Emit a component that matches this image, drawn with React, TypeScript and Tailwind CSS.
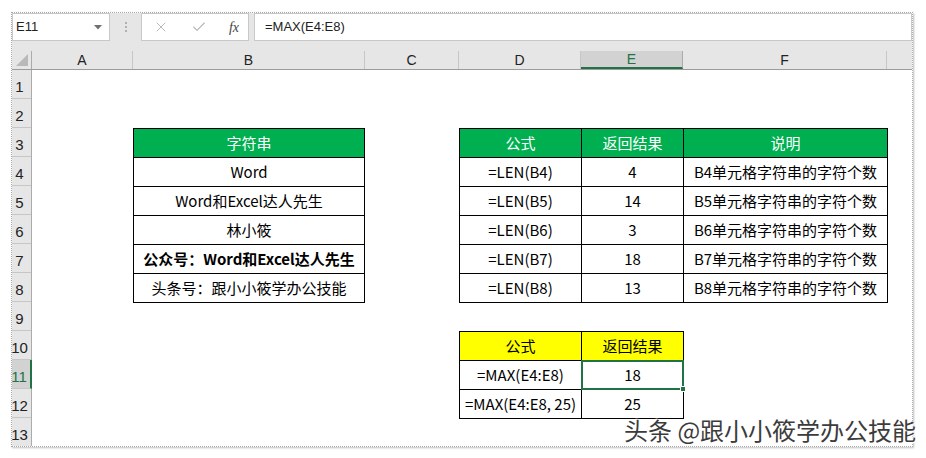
import { X, Check } from "lucide-react";

const cellFont = { fontFamily: '"Noto Sans CJK SC", "Liberation Sans", sans-serif' };

const colLetters = [
  { label: "A", w: "w-[101px]" },
  { label: "B", w: "w-[232px]" },
  { label: "C", w: "w-[94px]" },
  { label: "D", w: "w-[122px]" },
  { label: "E", w: "w-[102px]", active: true },
  { label: "F", w: "w-[204px]" },
];

const strings = [
  "Word",
  "Word和Excel达人先生",
  "林小筱",
  "公众号：Word和Excel达人先生",
  "头条号：跟小小筱学办公技能",
];

const lenRows = [
  { f: "=LEN(B4)", r: 4, d: "B4单元格字符串的字符个数" },
  { f: "=LEN(B5)", r: 14, d: "B5单元格字符串的字符个数" },
  { f: "=LEN(B6)", r: 3, d: "B6单元格字符串的字符个数" },
  { f: "=LEN(B7)", r: 18, d: "B7单元格字符串的字符个数" },
  { f: "=LEN(B8)", r: 13, d: "B8单元格字符串的字符个数" },
];

const rows = Array.from({ length: 13 }, (_, i) => i + 1);

const td = "border border-black text-center text-[15px] text-black h-[29px] p-0 whitespace-nowrap";
const th = "border border-black text-center text-[15px] h-[29px] p-0 font-normal whitespace-nowrap";

export default function App() {
  return (
    <div className="relative w-[926px] h-[458px] bg-white overflow-hidden">
      <div className="ml-[11px] mt-[12px] w-[902px] h-[435px] border border-dotted border-[#a8a8a8] shadow-[1px_1px_2px_rgba(0,0,0,0.25)] overflow-hidden">
        {/* formula bar */}
        <div className="flex h-[28px] bg-[#e6e6e6] items-stretch" style={{ fontFamily: '"Liberation Sans", Arial, sans-serif' }}>
          <div className="w-[98px] bg-white border border-[#c8c8c8] flex items-center justify-between pl-[3px] pr-[7px] text-[13px] text-[#222]">
            <span>E11</span>
            <svg width="8" height="5" viewBox="0 0 8 5">
              <polygon points="0,0 8,0 4,4.5" fill="#707070" />
            </svg>
          </div>
          <div className="w-[31px] flex flex-col items-center justify-center gap-[2px]">
            <span className="w-[2px] h-[2px] bg-[#b0b0b0]" />
            <span className="w-[2px] h-[2px] bg-[#b0b0b0]" />
            <span className="w-[2px] h-[2px] bg-[#b0b0b0]" />
          </div>
          <div className="w-[108px] bg-white border border-[#c8c8c8] flex items-center pl-[11px] pr-[9px] justify-between">
            <X size={16} strokeWidth={1.4} color="#b4b4b4" />
            <Check size={16} strokeWidth={1.6} color="#b4b4b4" />
            <span className="italic text-[14px] text-[#444]" style={{ fontFamily: '"Liberation Serif", serif' }}>
              fx
            </span>
          </div>
          <div className="ml-[5px] flex-1 bg-white border border-[#c8c8c8] flex items-center pl-[10px] text-[13px] text-[#222]">
            =MAX(E4:E8)
          </div>
        </div>

        {/* column headers */}
        <div className="h-[29px] bg-[#e6e6e6] flex items-end border-b border-[#9c9c9c]" style={{ fontFamily: '"Liberation Sans", Arial, sans-serif' }}>
          <div className="w-[20px] h-[18px] border-r border-[#ababab] relative">
            <svg className="absolute right-[3px] bottom-[3px]" width="12" height="12" viewBox="0 0 12 12">
              <polygon points="12,0 12,12 0,12" fill="#b9b9b9" />
            </svg>
          </div>
          {colLetters.map((c) =>
            c.active ? (
              <div
                key={c.label}
                className={`${c.w} h-[18px] bg-[#d2d2d2] border-r border-[#ababab] border-b-2 border-b-[#217346] flex items-center justify-center text-[14px] text-[#217346]`}
              >
                {c.label}
              </div>
            ) : (
              <div key={c.label} className={`${c.w} h-[18px] border-r border-[#c6c6c6] flex items-center justify-center text-[14px] text-[#222]`}>
                {c.label}
              </div>
            )
          )}
          <div className="flex-1 h-[18px]" />
        </div>

        {/* sheet body */}
        <div className="flex">
          <div className="w-[20px] flex flex-col bg-[#e6e6e6] border-r border-[#ababab]" style={{ fontFamily: '"Liberation Sans", Arial, sans-serif' }}>
            {rows.map((n) =>
              n === 11 ? (
                <div key={n} className="h-[29px] shrink-0 bg-[#d2d2d2] border-b border-[#c6c6c6] border-r-2 border-r-[#217346] -mr-px flex items-end">
                  <div className="w-[24px] -ml-[4px] text-center text-[15px] leading-[18px] text-[#217346] pb-[2px]">{n}</div>
                </div>
              ) : (
                <div key={n} className="h-[29px] shrink-0 border-b border-[#c6c6c6] flex items-end">
                  <div className="w-[24px] -ml-[4px] text-center text-[15px] leading-[18px] text-[#222] pb-[2px]">{n}</div>
                </div>
              )
            )}
          </div>

          <div
            className="flex-1 grid grid-cols-[101px_232px_94px_122px_102px_204px_1fr] grid-rows-[repeat(13,29px)]"
            style={cellFont}
          >
            {/* string table */}
            <div className="col-start-2 row-start-3 row-span-6">
              <table className="w-full border-collapse table-fixed">
                <thead>
                  <tr>
                    <th className={`${th} bg-[#00b050] text-white`}>字符串</th>
                  </tr>
                </thead>
                <tbody>
                  {strings.map((s, i) => (
                    <tr key={s}>
                      <td className={`${td} ${i === 3 ? "font-bold" : ""}`}>{s}</td>
                    </tr>
                  ))}
                </tbody>
              </table>
            </div>

            {/* LEN table */}
            <div className="col-start-4 col-span-3 row-start-3 row-span-6">
              <table className="w-full border-collapse table-fixed">
                <colgroup>
                  <col className="w-[122px]" />
                  <col className="w-[102px]" />
                  <col className="w-[204px]" />
                </colgroup>
                <thead>
                  <tr>
                    <th className={`${th} bg-[#00b050] text-white`}>公式</th>
                    <th className={`${th} bg-[#00b050] text-white`}>返回结果</th>
                    <th className={`${th} bg-[#00b050] text-white`}>说明</th>
                  </tr>
                </thead>
                <tbody>
                  {lenRows.map((r) => (
                    <tr key={r.f}>
                      <td className={td}>{r.f}</td>
                      <td className={td}>{r.r}</td>
                      <td className={td}>{r.d}</td>
                    </tr>
                  ))}
                </tbody>
              </table>
            </div>

            {/* MAX table */}
            <div className="col-start-4 col-span-2 row-start-10 row-span-3">
              <table className="w-full border-collapse table-fixed">
                <colgroup>
                  <col className="w-[122px]" />
                  <col className="w-[102px]" />
                </colgroup>
                <thead>
                  <tr>
                    <th className={`${th} bg-[#ffff00] text-black`}>公式</th>
                    <th className={`${th} bg-[#ffff00] text-black`}>返回结果</th>
                  </tr>
                </thead>
                <tbody>
                  <tr>
                    <td className={td}>=MAX(E4:E8)</td>
                    <td className={`${td} relative`}>
                      18
                      <div className="absolute -inset-px border-2 border-[#217346] pointer-events-none">
                        <div className="absolute -right-[4px] -bottom-[4px] w-[6px] h-[6px] bg-[#217346] border border-white" />
                      </div>
                    </td>
                  </tr>
                  <tr>
                    <td className={td}>=MAX(E4:E8, 25)</td>
                    <td className={td}>25</td>
                  </tr>
                </tbody>
              </table>
            </div>
          </div>
        </div>
      </div>

      {/* watermark */}
      <div
        className="absolute left-[624px] top-[415px] text-[24px] leading-[30px] text-[#3c3c3c] whitespace-nowrap [text-shadow:1px_1px_1px_#fff,-1px_-1px_1px_#fff,0_0_3px_#fff]"
        style={{ fontFamily: '"Noto Sans CJK SC", sans-serif' }}
      >
        头条 @跟小小筱学办公技能
      </div>
    </div>
  );
}
